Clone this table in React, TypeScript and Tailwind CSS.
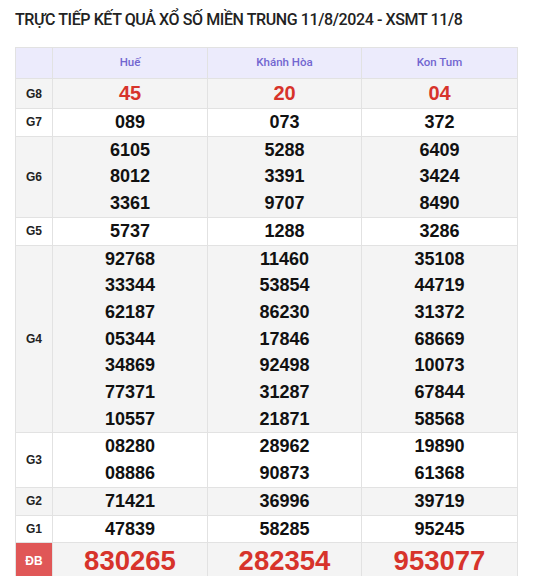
import React from "react";

type Row = { label: string; vals: string[][]; kind?: "g8" | "db"; bg: string };

const rows: Row[] = [
  { label: "G8", vals: [["45"], ["20"], ["04"]], kind: "g8", bg: "bg-[#f4f4f4]" },
  { label: "G7", vals: [["089"], ["073"], ["372"]], bg: "bg-white" },
  {
    label: "G6",
    vals: [
      ["6105", "8012", "3361"],
      ["5288", "3391", "9707"],
      ["6409", "3424", "8490"],
    ],
    bg: "bg-[#f4f4f4]",
  },
  { label: "G5", vals: [["5737"], ["1288"], ["3286"]], bg: "bg-white" },
  {
    label: "G4",
    vals: [
      ["92768", "33344", "62187", "05344", "34869", "77371", "10557"],
      ["11460", "53854", "86230", "17846", "92498", "31287", "21871"],
      ["35108", "44719", "31372", "68669", "10073", "67844", "58568"],
    ],
    bg: "bg-[#f4f4f4]",
  },
  {
    label: "G3",
    vals: [
      ["08280", "08886"],
      ["28962", "90873"],
      ["19890", "61368"],
    ],
    bg: "bg-white",
  },
  { label: "G2", vals: [["71421"], ["36996"], ["39719"]], bg: "bg-[#f4f4f4]" },
  { label: "G1", vals: [["47839"], ["58285"], ["95245"]], bg: "bg-white" },
  { label: "ĐB", vals: [["830265"], ["282354"], ["953077"]], kind: "db", bg: "bg-[#f4f4f4]" },
];

export default function App() {
  return (
    <div className="w-[551px] h-[576px] overflow-hidden bg-white">
      <div className="px-[15px] pt-[9px]">
        <h1 className="font-['Roboto',sans-serif] font-medium text-[16px] leading-[21px] text-[#222] tracking-[-0.4px]">
          TRỰC TIẾP KẾT QUẢ XỔ SỐ MIỀN TRUNG 11/8/2024 - XSMT 11/8
        </h1>
        <div className="mt-[17px] w-[503px] border-t border-l border-[#e2e2e2] font-['Liberation_Sans',Arial,sans-serif]">
          <div className="grid grid-cols-[37px_155px_154px_156px] bg-[#ecebfc] h-[31px] border-b border-[#e2e2e2]">
            <div className="border-r border-[#e2e2e2]" />
            {["Huế", "Khánh Hòa", "Kon Tum"].map((n) => (
              <div
                key={n}
                className="border-r border-[#e2e2e2] flex items-center justify-center font-['Roboto',sans-serif] font-medium text-[11.5px] text-[#7266d0]"
              >
                {n}
              </div>
            ))}
          </div>
          {rows.map((r) => (
            <div
              key={r.label}
              className={`grid grid-cols-[37px_155px_154px_156px] border-b border-[#e2e2e2] ${r.bg}`}
            >
              <div
                className={`border-r border-[#e2e2e2] flex items-center justify-center font-bold text-[12px] ${
                  r.kind === "db" ? "bg-[#e05757] text-white" : "text-[#222]"
                }`}
              >
                {r.label}
              </div>
              {r.vals.map((col, i) => (
                <div key={i} className="border-r border-[#e2e2e2] flex flex-col items-center">
                  {col.map((v) => (
                    <div
                      key={v}
                      className={
                        r.kind === "g8"
                          ? "font-bold text-[20px] leading-[29px] text-[#d7332b]"
                          : r.kind === "db"
                          ? "font-bold text-[27.5px] leading-[36px] text-[#d7332b]"
                          : "font-bold text-[18px] leading-[26.7px] text-[#111]"
                      }
                    >
                      {v}
                    </div>
                  ))}
                </div>
              ))}
            </div>
          ))}
        </div>
      </div>
    </div>
  );
}
